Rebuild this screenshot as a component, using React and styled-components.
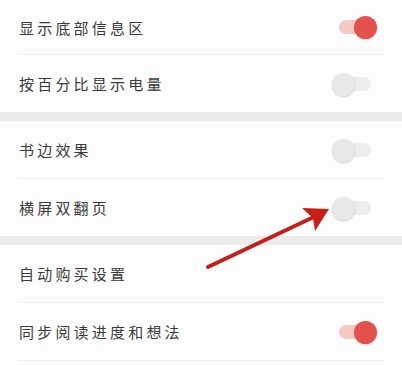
import React from "react";
import styled, { createGlobalStyle } from "styled-components";

const Global = createGlobalStyle`
  html, body { margin: 0; padding: 0; background: #fdfdfd; }
  body {
    font-family: "Noto Sans CJK SC", "Noto Sans", sans-serif;
    -webkit-font-smoothing: antialiased;
  }
`;

const Page = styled.div`
  position: relative;
  width: 402px;
  height: 365px;
  overflow: hidden;
  background: #fdfdfd;
`;

const Section = styled.div`
  background: #fdfdfd;
`;

const Gap = styled.div`
  height: 9px;
  background: #ececec;
`;

const Row = styled.div`
  display: flex;
  align-items: center;
  justify-content: space-between;
  height: ${p => p.h || 57}px;
  padding: 0 25px 0 19px;
  box-sizing: border-box;
`;

const Divider = styled.div`
  height: 1px;
  margin: 0 18px;
  background: #efefef;
`;

const Label = styled.span`
  font-size: 15px;
  letter-spacing: 3.2px;
  color: #3a3a3a;
`;

const Switch = styled.div`
  position: relative;
  width: 45px;
  height: 24px;
  flex: none;
`;

const Track = styled.div`
  position: absolute;
  left: 7px;
  right: 6px;
  top: 5px;
  height: 14px;
  border-radius: 7px;
  background: ${p => (p.on ? "#f6c9c7" : "#ededed")};
`;

const Knob = styled.div`
  position: absolute;
  top: 1px;
  ${p => (p.on ? "right: 0;" : "left: 0;")}
  width: 23px;
  height: 23px;
  border-radius: 50%;
  background: ${p => (p.on ? "#e2514b" : "#e8e8e8")};
  box-shadow: 0 1px 2px rgba(0, 0, 0, 0.18);
`;

const Arrow = styled.svg`
  position: absolute;
  left: 0;
  top: 0;
  pointer-events: none;
`;

const Toggle = ({ on }) => (
  <Switch>
    <Track on={on} />
    <Knob on={on} />
  </Switch>
);

const sections = [
  [
    { label: "显示底部信息区", toggle: true, on: true, h: 54 },
    { label: "按百分比显示电量", toggle: true, on: false, h: 57 }
  ],
  [
    { label: "书边效果", toggle: true, on: false },
    { label: "横屏双翻页", toggle: true, on: false }
  ],
  [
    { label: "自动购买设置", toggle: false },
    { label: "同步阅读进度和想法", toggle: true, on: true }
  ]
];

export default function App() {
  return (
    <Page>
      <Global />
      {sections.map((items, si) => (
        <React.Fragment key={si}>
          {si > 0 && <Gap />}
          <Section>
            {items.map((it, i) => (
              <React.Fragment key={it.label}>
                <Row h={it.h}>
                  <Label>{it.label}</Label>
                  {it.toggle && <Toggle on={it.on} />}
                </Row>
                {(i < items.length - 1 || si === sections.length - 1) && <Divider />}
              </React.Fragment>
            ))}
          </Section>
        </React.Fragment>
      ))}
      <Arrow width="402" height="365" viewBox="0 0 402 365">
        <line x1="208" y1="267" x2="318" y2="215" stroke="#c41f19" strokeWidth="4" strokeLinecap="round" />
        <path d="M302 208 L329 209 L315 231 L313 218 Z" fill="#c41f19" />
      </Arrow>
    </Page>
  );
}
